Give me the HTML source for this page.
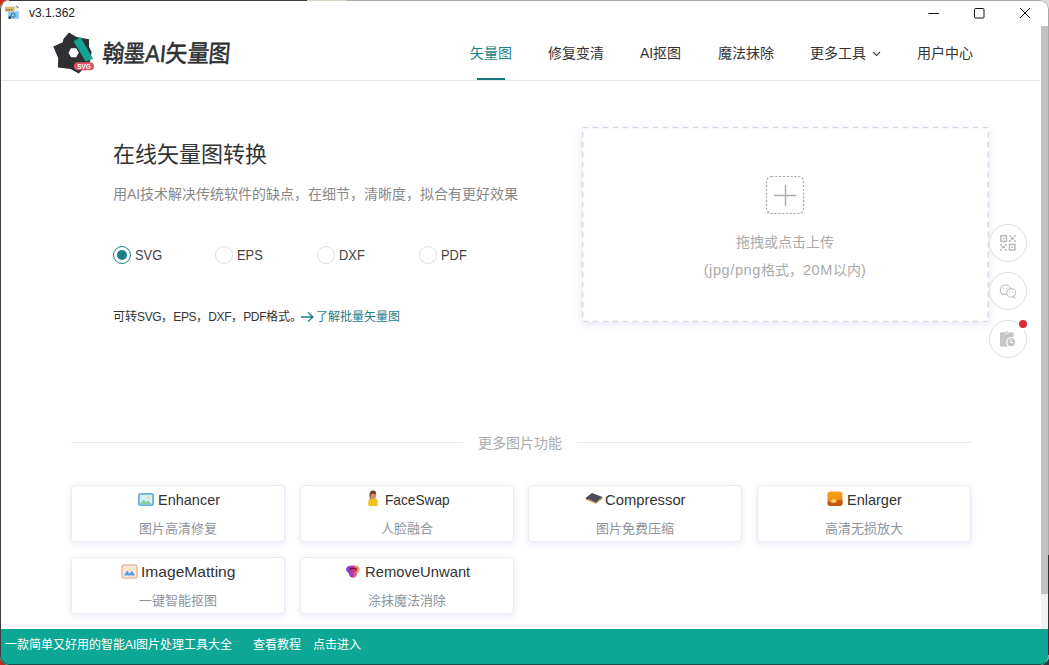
<!DOCTYPE html>
<html lang="zh-CN"><head><meta charset="utf-8">
<style>
*{margin:0;padding:0;box-sizing:border-box}
html,body{width:1049px;height:665px;overflow:hidden;background:#444}
body{font-family:"Liberation Sans",sans-serif;position:relative}
.win{position:absolute;left:0;top:0;width:1049px;height:665px;background:#fff;border-radius:9px;overflow:hidden}
.frame{position:absolute;left:0;top:0;width:1049px;height:665px;border:1px solid;border-color:#a8a8a8 #a8a8a8 #174e48 #3c3c3c;border-radius:9px;pointer-events:none}
.abs{position:absolute}
.title{left:29px;top:6px;font-size:12px;color:#222;line-height:14px}
.hdr-line{left:0;top:80px;width:1040px;height:1px;background:#e4e4e4}
.nav{top:44px;font-size:14px;color:#333;line-height:18px;white-space:nowrap}
.nav.act{color:#1b7f86}
.uline{left:477px;top:78px;width:28px;height:2px;background:#17757b}
.scroll{left:1041px;top:26px;width:7px;height:603px;background:#f1f1f1}
.thumb{left:1041px;top:26px;width:7px;height:568px;background:#c1c1c1}
.h1{left:113px;top:142px;font-size:22px;color:#333;line-height:26px}
.sub{left:113px;top:185px;font-size:14px;color:#888;line-height:18px}
.radio{top:246px;width:18px;height:18px;border:1px solid #e0e0e0;border-radius:50%}
.radio.on{border:1.5px solid #1b8088}
.radio.on:after{content:"";position:absolute;left:2.5px;top:2.5px;width:10px;height:10px;border-radius:50%;background:#1b8088}
.rlab{top:246px;font-size:14px;color:#444;line-height:18px;transform-origin:0 50%;transform:scaleX(0.92)}
.note{left:113px;top:309px;font-size:12px;color:#333;line-height:16px}
.note span{color:#1f7d86}
.note i{font-style:normal;font-size:12px;letter-spacing:-0.35px}
.upload{left:582px;top:127px;width:407px;height:195px;box-shadow:0 2px 10px rgba(110,90,230,.16);border-radius:2px}
.plus{left:767px;top:177px;width:37px;height:37px;border:1.5px dashed #aaa;border-radius:5px}
.up1{left:582px;top:233px;width:406px;text-align:center;font-size:14px;color:#aaa;line-height:18px}
.up2{left:582px;top:261px;width:406px;text-align:center;font-size:14px;color:#aaa;line-height:18px}
.up2 i{font-style:normal;font-size:14.5px;letter-spacing:0.6px}
.side{left:989px;width:38px;height:38px;border:1px solid #dedede;border-radius:50%;background:#fff}
.dot{left:1018.8px;top:319.9px;width:8.4px;height:8.4px;border-radius:50%;background:#dc2c3c}
.divl{top:442px;height:1px;background:#e8e8e8}
.divt{left:464px;top:434px;width:112px;text-align:center;font-size:14px;color:#aaa;line-height:18px}
.card{width:214px;height:57px;border:1px solid #ecebf3;border-radius:4px;box-shadow:0 2px 7px rgba(100,80,220,.13);background:#fff}
.ct{font-size:14.5px;color:#333;line-height:18px;white-space:nowrap;transform-origin:0 50%}
.cs{top:520px;text-align:center;font-size:13px;color:#8e939c;line-height:17px}
.ic{display:inline-block;width:15px;height:14px;vertical-align:-1px;margin-right:4px;border-radius:2px}
.foot{left:0;top:629px;width:1049px;height:36px;background:#0da795}
.ft{top:637px;font-size:12px;color:#fff;line-height:17px;white-space:nowrap}
</style></head><body>
<div style="position:absolute;left:0;top:0;width:20px;height:20px;background:#c0321e"></div>
<div style="position:absolute;right:0;top:0;width:20px;height:20px;background:#dcdcdc"></div>
<div style="position:absolute;left:0;bottom:0;width:20px;height:20px;background:#b5301f"></div>
<div style="position:absolute;right:0;bottom:0;width:20px;height:20px;background:#2a3a3e"></div>
<div class="win">
  <!-- title bar -->
  <svg class="abs" style="left:4px;top:4px" width="16" height="16" viewBox="4 4 16 16">
    <path d="M8.3 5.2 H16.2 L18.8 7.8 V18.8 H8.3Z" fill="#e4f2fa"/>
    <path d="M16.2 5.2 L18.8 7.8 L16.8 7.5Z" fill="#3a4a55"/>
    <rect x="8.3" y="11.5" width="10.5" height="7.3" fill="#8cc6ea"/>
    <circle cx="13.2" cy="15.2" r="2" fill="none" stroke="#2f6c98" stroke-width="1"/>
    <circle cx="9.8" cy="17.6" r="1.3" fill="#1d2d3a"/>
    <rect x="5" y="6.8" width="9.6" height="4.8" fill="#d8bd76"/>
    <path d="M6 9.8h1.5M8.5 9.8h1.5M11 9.8h1.5" stroke="#6d5522" stroke-width="1.2"/>
  </svg>
  <div class="abs title">v3.1.362</div>
  <svg class="abs" style="left:924px;top:6px" width="110" height="14">
    <line x1="4.5" y1="7.5" x2="15" y2="7.5" stroke="#111" stroke-width="1"/>
    <rect x="50.5" y="2.5" width="9.5" height="9.5" rx="1" fill="none" stroke="#111" stroke-width="1"/>
    <line x1="96" y1="2" x2="106" y2="12" stroke="#111" stroke-width="1"/>
    <line x1="106" y1="2" x2="96" y2="12" stroke="#111" stroke-width="1"/>
  </svg>
  <!-- logo -->
  <svg class="abs" style="left:48px;top:28px" width="50" height="50" viewBox="48 28 50 50">
    <polygon points="69,32.5 76.6,37 89,39.3 89,46.8 91.6,52 90,61.8 78.8,73.5 70.6,69 57.8,67.5 58.2,58 53.3,46.4 62.7,42.3 63.4,38.9" fill="#2e3033"/>
    <polygon points="68.5,52.8 71,48.3 76.2,48.3 78.8,52.8 76.2,57.3 71,57.3" fill="#fff"/>
    <polygon points="73.6,41.2 80.3,37 93.1,58.8 85.6,61.5" fill="#16a394"/>
    <rect x="74" y="62.2" width="20" height="8" rx="4" fill="#d9545e"/>
    <text x="84" y="68.8" font-size="6.5" fill="#fff" text-anchor="middle" font-family="Liberation Sans" font-weight="bold">SVG</text>
  </svg>
  <div class="abs" style="left:101px;top:39px;font-size:24px;color:#2e3033;line-height:30px;font-weight:normal;-webkit-text-stroke:0.55px #2e3033;white-space:nowrap;transform-origin:0 100%;transform:skewX(-5deg) scaleX(0.9)">翰墨AI矢量图</div>
  <div class="abs nav act" style="left:470px">矢量图</div>
  <div class="abs nav" style="left:548px">修复变清</div>
  <div class="abs nav" style="left:640px">AI抠图</div>
  <div class="abs nav" style="left:718px">魔法抹除</div>
  <div class="abs nav" style="left:810px">更多工具<svg style="position:absolute;left:62px;top:7px" width="9" height="6"><polyline points="1,1 4.5,4.5 8,1" fill="none" stroke="#444" stroke-width="1.1"/></svg></div>
  <div class="abs nav" style="left:917px">用户中心</div>
  <div class="abs uline"></div>
  <div class="abs hdr-line"></div>
  <div class="abs scroll"></div>
  <div class="abs thumb"></div>

  <!-- main -->
  <div class="abs h1">在线矢量图转换</div>
  <div class="abs sub">用AI技术解决传统软件的缺点，在细节，清晰度，拟合有更好效果</div>
  <div class="abs radio on" style="left:113px"></div><div class="abs rlab" style="left:135px">SVG</div>
  <div class="abs radio" style="left:215px"></div><div class="abs rlab" style="left:237px">EPS</div>
  <div class="abs radio" style="left:317px"></div><div class="abs rlab" style="left:339px">DXF</div>
  <div class="abs radio" style="left:419px"></div><div class="abs rlab" style="left:441px">PDF</div>
  <div class="abs note">可转<i>SVG</i>，<i>EPS</i>，<i>DXF</i>，<i>PDF</i>格式。</div>
  <svg class="abs" style="left:300px;top:311px" width="15" height="12"><path d="M1 6H13M8 1.5L13 6L8 10.5" fill="none" stroke="#1f7d86" stroke-width="1.3"/></svg>
  <div class="abs note" style="left:316px"><span>了解批量矢量图</span></div>

  <div class="abs upload"><svg width="407" height="195" style="position:absolute;left:0;top:0"><rect x="0.5" y="0.5" width="406" height="194" fill="#fff" stroke="#dadae2" stroke-width="1.7" stroke-dasharray="6 4"/></svg></div>
  <svg class="abs" style="left:765px;top:175px" width="42" height="42"><rect x="1.5" y="1.5" width="37" height="37" rx="5" fill="none" stroke="#aaa" stroke-width="1.2" stroke-dasharray="2.2 1.6"/><path d="M9 20.5H31M20.5 10V31" stroke="#aaa" stroke-width="1.4"/></svg>
  <div class="abs up1">拖拽或点击上传</div>
  <div class="abs up2"><i>(jpg/png</i>格式，<i>20M</i>以内<i>)</i></div>

  <div class="abs side" style="top:224px"><svg width="38" height="38" style="position:absolute;left:-1px;top:-1px"><g fill="none" stroke="#bcbcbc" stroke-width="1.5"><rect x="11.8" y="11.8" width="5.6" height="5.6"/><rect x="20.4" y="20.4" width="5.6" height="5.6"/></g><g fill="#bcbcbc"><rect x="13.8" y="13.8" width="1.6" height="1.6"/><rect x="22.4" y="22.4" width="1.6" height="1.6"/><rect x="20" y="11" width="1.8" height="1.8"/><rect x="25" y="11" width="1.8" height="1.8"/><rect x="21.5" y="13.2" width="3.5" height="2.5"/><rect x="20" y="16.2" width="1.8" height="1.8"/><rect x="25" y="16.2" width="1.8" height="1.8"/><rect x="11" y="20" width="1.8" height="1.8"/><rect x="16" y="20" width="1.8" height="1.8"/><rect x="12.5" y="21.8" width="3.5" height="2.5"/><rect x="11" y="25" width="1.8" height="1.8"/><rect x="16" y="25" width="1.8" height="1.8"/></g></svg></div>
  <div class="abs side" style="top:272px"><svg width="38" height="38" style="position:absolute;left:-1px;top:-1px"><g fill="#fff" stroke="#c2c2c2" stroke-width="1.2"><path d="M13.5 21.8 C11.5 20.8 11 18.8 11.5 17 C12.3 14.3 14.6 13 16.5 13 C19.3 13 21.6 15 21.6 17.6 C21.6 20.3 19.2 22.3 16.4 22.3 C15.7 22.3 15 22.2 14.4 22 L12.6 23 Z"/><path d="M24.6 24.2 C26 23.3 26.7 22 26.7 20.7 C26.7 18.4 24.6 16.7 22.3 16.7 C19.8 16.7 17.8 18.5 17.8 20.9 C17.8 23.3 19.8 25.1 22.3 25.1 C22.9 25.1 23.5 25 24 24.8 L25.5 25.5Z"/></g><g fill="#c2c2c2"><circle cx="14.6" cy="16.3" r="0.7"/><circle cx="18" cy="16.3" r="0.7"/><circle cx="20.8" cy="20.2" r="0.6"/><circle cx="23.8" cy="20.2" r="0.6"/></g></svg></div>
  <div class="abs side" style="top:320px"><svg width="38" height="38" style="position:absolute;left:-1px;top:-1px"><rect x="11" y="12.2" width="13.6" height="14.4" rx="0.8" fill="#c6c6c6"/><rect x="16" y="11" width="3.4" height="2.4" rx="1" fill="#c6c6c6" stroke="#fff" stroke-width="0.8"/><circle cx="22.3" cy="22.2" r="4.6" fill="#c6c6c6" stroke="#fff" stroke-width="1.3"/><path d="M21.9 19.6 V22.6 H24.4" fill="none" stroke="#fff" stroke-width="1.1"/></svg></div>
  <div class="abs" style="left:1017.5px;top:318.5px;width:11px;height:11px;border-radius:50%;background:#fff"></div>
  <div class="abs dot"></div>

  <div class="abs divl" style="left:71px;width:392px"></div>
  <div class="abs divt">更多图片功能</div>
  <div class="abs divl" style="left:577px;width:394px"></div>

  <div class="abs card" style="left:71px;top:485px"></div>
  <div class="abs card" style="left:300px;top:485px"></div>
  <div class="abs card" style="left:528px;top:485px"></div>
  <div class="abs card" style="left:757px;top:485px"></div>
  <div class="abs card" style="left:71px;top:557px"></div>
  <div class="abs card" style="left:300px;top:557px"></div>

  <!-- icons -->
  <svg class="abs" style="left:137px;top:492px" width="18" height="15" viewBox="0 0 18 15">
    <rect x="1" y="1" width="16" height="13" rx="2.5" fill="#6aaee0"/>
    <rect x="2.8" y="2.8" width="12.4" height="9.4" rx="1" fill="#d6eefa"/>
    <path d="M2.8 12.2 L6.5 7.5 L9 10 L11 8.5 L15.2 12.2Z" fill="#8cc9a0"/>
    <circle cx="11.5" cy="5.5" r="1.2" fill="#f4d06a"/>
  </svg>
  <svg class="abs" style="left:367px;top:490px" width="12" height="17" viewBox="0 0 12 17">
    <path d="M1.5 16 C0.8 12 1.5 9 3.5 8.5 L8.5 8.5 C10.5 9 11.2 12 10.5 16Z" fill="#f4c21c"/>
    <ellipse cx="6" cy="5" rx="3.3" ry="4" fill="#d58a6a"/>
    <path d="M2.6 6 C2.2 1.5 4.5 0.5 6.2 0.6 C8.5 0.7 9.6 2.5 9 4.5 C7.5 3.5 5 3.5 3.6 5 L3.6 10 C3 9.5 2.7 8 2.6 6Z" fill="#7a4030"/>
  </svg>
  <svg class="abs" style="left:585px;top:492px" width="18" height="12" viewBox="0 0 18 12">
    <path d="M0.5 6 L7 1 L17.5 5 L11 10.5Z" fill="#4a4d5c"/>
    <path d="M0.5 6 L0.8 7.5 L11 11.8 L17.5 6.5 L17.5 5 L11 10.5Z" fill="#b58a3c"/>
    <rect x="1.5" y="6" width="1.5" height="1" fill="#222"/>
  </svg>
  <svg class="abs" style="left:827px;top:491px" width="16" height="16" viewBox="0 0 16 16">
    <defs><linearGradient id="gE" x1="0" y1="0" x2="0" y2="1"><stop offset="0" stop-color="#f9a51c"/><stop offset="1" stop-color="#e8781a"/></linearGradient></defs>
    <rect x="0.5" y="0.5" width="15" height="14.5" rx="3" fill="url(#gE)"/>
    <path d="M0.5 11 C4 9.5 7 8.5 9 10 C11 9 13 8.5 15.5 9.5 L15.5 12 Q15.5 15 12.5 15 L3.5 15 Q0.5 15 0.5 12Z" fill="#c9560e"/>
    <defs><radialGradient id="gG"><stop offset="0" stop-color="#fff3b0"/><stop offset="0.5" stop-color="#ffd36a" stop-opacity=".8"/><stop offset="1" stop-color="#f9a51c" stop-opacity="0"/></radialGradient></defs><ellipse cx="6.5" cy="10" rx="4.5" ry="2.8" fill="url(#gG)"/>
  </svg>
  <svg class="abs" style="left:121px;top:564px" width="17" height="15" viewBox="0 0 17 15">
    <rect x="1" y="1" width="15" height="13" rx="2.5" fill="#fbe9e0" stroke="#eeb9a3" stroke-width="1.6"/>
    <path d="M2.8 11.5 L6 6.5 L8.5 9.5 L11 6.8 L14.2 11.5Z" fill="#5b9fe3"/>
    <rect x="2.8" y="4" width="11.4" height="2" fill="#f8e8c6"/>
  </svg>
  <svg class="abs" style="left:345px;top:562px" width="17" height="17" viewBox="0 0 17 17">
    <defs><linearGradient id="gR" x1="0" y1="0" x2="1" y2="0"><stop offset="0" stop-color="#6a3ce8"/><stop offset="0.5" stop-color="#c83aa8"/><stop offset="1" stop-color="#f6b840"/></linearGradient></defs>
    <path d="M1.2 7.5 C1 4.8 4 3.5 8 3.5 C12 3.5 15 4.8 14.8 7.5 C14.6 9.5 13.5 10.5 12.3 11 C12 14 10.5 15.8 8 15.8 C5.5 15.8 4 14 3.7 11 C2.5 10.5 1.4 9.5 1.2 7.5Z" fill="url(#gR)"/>
    <ellipse cx="8.2" cy="7.6" rx="3.6" ry="2" fill="#7a1248"/>
    <ellipse cx="8.2" cy="8.4" rx="3" ry="1.2" fill="#d8437a"/>
    <path d="M10.5 4.5 L15.5 1" stroke="#f0c9a0" stroke-width="0.7"/>
  </svg>

  <div class="abs ct" style="left:158px;top:490.5px">Enhancer</div>
  <div class="abs cs" style="left:71px;width:214px">图片高清修复</div>
  <div class="abs ct" style="left:385px;top:490.5px;transform:scaleX(.945)">FaceSwap</div>
  <div class="abs cs" style="left:300px;width:214px">人脸融合</div>
  <div class="abs ct" style="left:605px;top:490.5px;transform:scaleX(1.02)">Compressor</div>
  <div class="abs cs" style="left:528px;width:214px">图片免费压缩</div>
  <div class="abs ct" style="left:847px;top:490.5px">Enlarger</div>
  <div class="abs cs" style="left:757px;width:214px">高清无损放大</div>
  <div class="abs ct" style="left:141px;top:562.5px;transform:scaleX(1.075)">ImageMatting</div>
  <div class="abs cs" style="left:71px;width:214px;top:592px">一键智能抠图</div>
  <div class="abs ct" style="left:364.5px;top:562.5px;transform:scaleX(1.02)">RemoveUnwant</div>
  <div class="abs cs" style="left:300px;width:214px;top:592px">涂抹魔法消除</div>

  <div class="abs foot"></div>
  <div class="abs ft" style="left:5px">一款简单又好用的智能AI图片处理工具大全</div>
  <div class="abs ft" style="left:253px">查看教程</div>
  <div class="abs ft" style="left:313px">点击进入</div>
  <div class="frame"></div>
  <div class="abs" style="left:9px;top:0;width:298px;height:1px;background:#3a3a3a"></div>
  <div class="abs" style="left:307px;top:0;width:40px;height:1px;background:#d9d6c6"></div>
  <div class="abs" style="left:1048px;top:555px;width:1px;height:100px;background:#333"></div>
</div>
</body></html>
